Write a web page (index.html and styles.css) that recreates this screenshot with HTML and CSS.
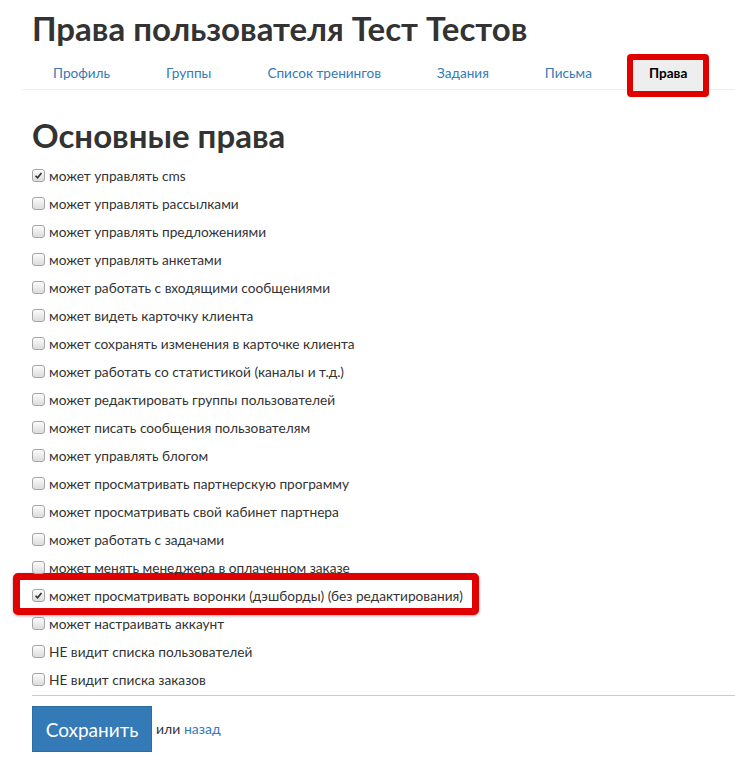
FILE: index.html
```html
<html>
    <head>
        <meta charset="utf-8">
        <title>Права пользователя</title>
        <link rel="stylesheet" href="styles.css">
    </head>
    <body>
        <h1 class="page-title">Права пользователя Тест Тестов</h1>

        <ul class="tabs">
            <li><a href="#">Профиль</a></li>
            <li><a href="#">Группы</a></li>
            <li><a href="#">Список тренингов</a></li>
            <li><a href="#">Задания</a></li>
            <li><a href="#">Письма</a></li>
            <li class="active"><a href="#">Права</a></li>
        </ul>

        <h2 class="section-title">Основные права</h2>

        <div class="rights">
            <label class="right"><span class="box checked"><svg viewBox="0 0 13 13"><path d="M3 6.8 L5.4 9.2 L10 3.6" /></svg></span>может управлять cms</label>
            <label class="right"><span class="box"></span>может управлять рассылками</label>
            <label class="right"><span class="box"></span>может управлять предложениями</label>
            <label class="right"><span class="box"></span>может управлять анкетами</label>
            <label class="right"><span class="box"></span>может работать с входящими сообщениями</label>
            <label class="right"><span class="box"></span>может видеть карточку клиента</label>
            <label class="right"><span class="box"></span>может сохранять изменения в карточке клиента</label>
            <label class="right"><span class="box"></span>может работать со статистикой (каналы и т.д.)</label>
            <label class="right"><span class="box"></span>может редактировать группы пользователей</label>
            <label class="right"><span class="box"></span>может писать сообщения пользователям</label>
            <label class="right"><span class="box"></span>может управлять блогом</label>
            <label class="right"><span class="box"></span>может просматривать партнерскую программу</label>
            <label class="right"><span class="box"></span>может просматривать свой кабинет партнера</label>
            <label class="right"><span class="box"></span>может работать с задачами</label>
            <label class="right"><span class="box"></span>может менять менеджера в оплаченном заказе</label>
            <label class="right marked"><span class="box checked"><svg viewBox="0 0 13 13"><path d="M3 6.8 L5.4 9.2 L10 3.6" /></svg></span>может просматривать воронки (дэшборды) (без редактирования)</label>
            <label class="right"><span class="box"></span>может настраивать аккаунт</label>
            <label class="right"><span class="box"></span>НЕ видит списка пользователей</label>
            <label class="right"><span class="box"></span>НЕ видит списка заказов</label>
        </div>

        <div class="actions">
            <button class="save-button">Сохранить</button>
            <span class="or">или <a href="#">назад</a></span>
        </div>
    </body>
</html>
```

FILE: styles.css
```css
*, *::before, *::after {
    font-family: 'Lato', 'Open Sans', sans-serif;
    box-sizing: border-box;
}

body {
    margin: 0;
    padding: 0 0 0 32px;
    color: #333;
    background: #fff;
}

a {
    color: #337ab7;
    text-decoration: none;
}

.page-title {
    margin: 0;
    padding-top: 8px;
    font-size: 33px;
    line-height: 40px;
    font-weight: 700;
}

.tabs {
    display: flex;
    list-style: none;
    margin: 12px 0 0 -10px;
    padding: 0 0 0 16px;
    height: 30px;
    border-bottom: 1px solid #eee;
    gap: 26px;
}

.tabs li {
    height: 30px;
}

.tabs a {
    display: block;
    padding: 0 15px;
    line-height: 27px;
    font-size: 13.6px;
}

.tabs .active {
    position: relative;
}

.tabs .active a {
    background: #eee;
    color: #000;
    font-weight: 700;
    padding: 0 16px;
    height: 31px;
}

/* red marker around the active tab */
.tabs .active::after {
    content: "";
    position: absolute;
    left: -6px;
    right: -6px;
    top: -6px;
    bottom: -7px;
    border: 6px solid #e00000;
    border-radius: 4px;
    pointer-events: none;
}

.section-title {
    margin: 0;
    padding-top: 25px;
    font-size: 33px;
    line-height: 40px;
    font-weight: 700;
}

.rights {
    padding-top: 6px;
    padding-bottom: 2px;
    border-bottom: 1px solid #ccc;
}

.right {
    display: flex;
    align-items: center;
    height: 28px;
    font-size: 13.7px;
    color: #333;
}

.marked {
    position: relative;
}

.marked::before {
    content: "";
    position: absolute;
    left: -19px;
    top: -8px;
    width: 466px;
    height: 42px;
    border: 7px solid #e00000;
    border-radius: 5px;
    box-shadow: 0 1px 3px rgba(0, 0, 0, 0.35);
    z-index: -1;
    background: #fff;
}

.box {
    width: 13px;
    height: 13px;
    margin-right: 4px;
    border: 1px solid #a6a6a6;
    border-radius: 3px;
    background: linear-gradient(#fcfcfc, #dcdcdc);
    flex-shrink: 0;
}

.box svg {
    display: block;
    width: 11px;
    height: 11px;
}

.box path {
    fill: none;
    stroke: #333;
    stroke-width: 2;
}

.actions {
    display: flex;
    align-items: center;
    padding-top: 10px;
    gap: 4px;
}

.save-button {
    background: #337ab7;
    border: 1px solid #2e6da4;
    color: #fff;
    font-size: 19px;
    width: 120px;
    height: 46px;
    border-radius: 0;
    cursor: pointer;
}

.or {
    font-size: 14px;
    margin-top: -2px;
}
```
